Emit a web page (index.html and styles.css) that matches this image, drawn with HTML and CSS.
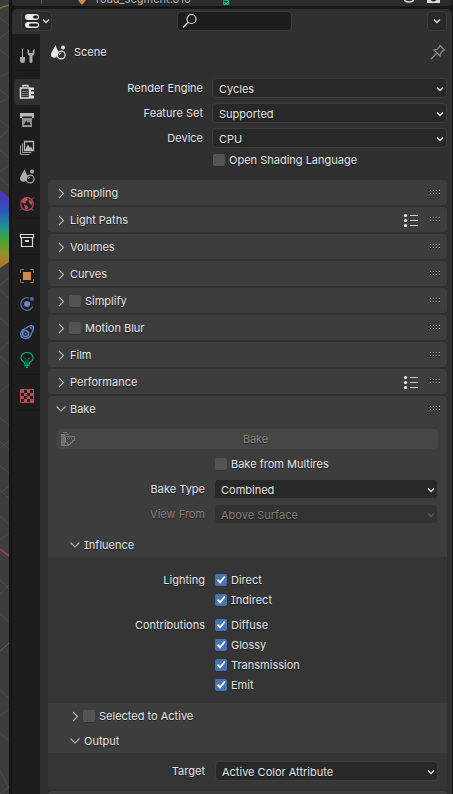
FILE: index.html
```html
<!DOCTYPE html>
<html lang="en">
<head>
<meta charset="utf-8">
<meta name="viewport" content="width=device-width, initial-scale=1">
<title>Render Properties</title>
<link rel="stylesheet" href="styles.css">
</head>
<body>
<svg class="defs" aria-hidden="true">
  <symbol id="right" viewBox="0 0 16 16"><path d="M6 4L10.500 8.500L6 13" fill="none" stroke="currentColor" stroke-width="1.100"/></symbol>
  <symbol id="down" viewBox="0 0 16 16"><path d="M3.500 5.500L8 10L12.500 5.500" fill="none" stroke="currentColor" stroke-width="1.100"/></symbol>
  <symbol id="drop" viewBox="0 0 8 8"><path d="M1 2.500L4 5.500L7 2.500" fill="none" stroke="currentColor" stroke-width="1.400"/></symbol>
  <symbol id="grip" viewBox="0 0 12 6">
    <path d="M0 1.500H12M0 4.500H12" stroke="#080808" stroke-dasharray="1 2"/>
    <path d="M0 .5H12M0 3.500H12" stroke="#a8a8a8" stroke-dasharray="1 2"/>
  </symbol>
  <symbol id="list" viewBox="0 0 16 16">
    <g fill="#eee"><circle cx="2.500" cy="3.500" r="1.600"/><circle cx="2.500" cy="8.500" r="1.600"/><circle cx="2.500" cy="13.500" r="1.600"/></g>
    <path d="M7 3.500H15M7 8.500H15M7 13.500H15" stroke="#ccc"/>
  </symbol>
  <symbol id="scene" viewBox="0 0 16 16">
    <path d="M5.500 1C6.300 4 8.600 7 8.600 9.500C7.700 10.300 7.400 11.300 7.600 12.600C5 14.600 1 13.500 1 11C1 8 4.500 4 5.500 1Z" fill="currentColor"/>
    <circle cx="13" cy="3.500" r="2" fill="currentColor"/>
    <circle cx="11.200" cy="11" r="3.900" fill="none" stroke="currentColor" stroke-width="1.200"/>
    <path d="M9.200 11A2 2 0 0 1 11.200 9" fill="none" stroke="currentColor"/>
  </symbol>
</svg>

<div class="app">
  <svg class="viewport" viewBox="0 0 9 794" preserveAspectRatio="xMinYMin slice" aria-hidden="true">
    <defs>
      <linearGradient id="hue" x1="0" y1="0" x2="0" y2="1">
        <stop offset="0" stop-color="#5a2ab8"/><stop offset=".25" stop-color="#2b58b8"/>
        <stop offset=".48" stop-color="#23948f"/><stop offset=".65" stop-color="#48a22e"/>
        <stop offset=".82" stop-color="#979032"/><stop offset="1" stop-color="#b86a24"/>
      </linearGradient>
    </defs>
    <rect width="9" height="794" fill="#3d3d3d"/>
    <path d="M0 18L9 25M0 38L9 31M0 50L9 57M0 77L9 72M0 90L9 97M0 102L9 98M0 120L9 128M0 137L9 130M0 150L9 158M0 172L9 165M0 178L9 186M0 285L9 278M0 290L9 298M0 318L9 326M0 350L9 342M0 356L9 364M0 392L9 384M0 418L9 425M0 448L9 441M0 442L9 449M0 466L9 473M0 493L9 486M0 490L9 498M0 516L9 524M0 540L9 533M0 580L9 589M0 594L9 585M0 614L9 622M0 690L9 698M0 716L9 709M0 733L9 741M0 771L9 788M0 794L9 787" stroke="#4c4c4c" fill="none"/>
    <path d="M0 651L9 643" stroke="#666"/>
    <path d="M0 8L9 5" stroke="#5f8f27" stroke-width="1.300"/>
    <path d="M0 549L9 556" stroke="#b53a50" stroke-width="1.500"/>
    <path d="M0 191C4 193 7 195 9 198V262L0 268Z" fill="url(#hue)"/>
  </svg>

  <div class="editors">
    <div class="outliner">
      <span class="guide"></span>
      <svg class="mesh" width="8" height="6" viewBox="0 0 8 6"><path d="M0 0H8L5 4Q4 5 3 4Z" fill="#d08746"/></svg>
      <span class="object-name">road_segment.010</span>
      <svg class="data" width="8" height="6" viewBox="0 0 8 6"><path d="M1.500 2.500V4.500H3.500V2.500H1.500V.5H6.500V2.500H4.500V4.500H6.500V2.500" stroke="#00b884" fill="none"/></svg>
      <svg class="eye" width="10" height="3" viewBox="0 0 10 3"><path d="M0 0Q5 4 10 0" stroke="#ddd" stroke-width="1.400" fill="none"/></svg>
      <svg width="13" height="3" viewBox="0 0 13 3"><path d="M0 0H3.500Q6.500 3 9.500 0H13V3H0Z" fill="#ddd"/></svg>
    </div>

    <div class="properties">
      <header class="topbar">
        <button class="box editor-type" type="button" aria-label="Editor type">
          <svg width="16" height="16" viewBox="0 0 16 16"><rect x="1" y="1" width="14" height="6" rx="3" fill="#e8e8e8"/><rect x="1" y="9" width="14" height="6" rx="3" fill="#e8e8e8"/><rect x="9" y="2.500" width="5" height="3" rx="1.500" fill="#222"/><rect x="5" y="10.500" width="9" height="3" rx="1.500" fill="#222"/></svg>
          <svg class="drop" width="8" height="8"><use href="#drop"/></svg>
        </button>
        <label class="search">
          <svg width="16" height="16" viewBox="0 0 16 16"><circle cx="9.500" cy="6" r="4.500" fill="none" stroke="#e0e0e0" stroke-width="1.200"/><path d="M6 9.500L1 14.500" stroke="#e0e0e0" stroke-width="1.300"/></svg>
          <input type="text" aria-label="Search">
        </label>
        <button class="box options" type="button" aria-label="Options"><svg class="drop" width="8" height="8"><use href="#drop"/></svg></button>
      </header>

      <div class="columns">
        <nav class="tabs">
          <div class="group">
            <button type="button" aria-label="Tool"><svg width="16" height="16" viewBox="0 0 16 16"><path d="M3.500 1V9" stroke="#aaa"/><path d="M1 9H6V12.500Q6 15 3.500 15T1 12.500Z" fill="#aaa"/><path d="M8.500 1V5Q8.500 7 10.500 8V14Q12 16 13.500 14V8Q15.500 7 15.500 5V1L13.700 2.200V5H10.300V2.200Z" fill="#aaa"/></svg></button>
          </div>
          <div class="group">
            <button type="button" class="active" aria-label="Render"><svg width="16" height="16" viewBox="0 0 16 16"><path d="M4 3V1.500H9V3" fill="none" stroke="#ddd" stroke-width="1.300"/><path d="M1.500 4H10.500V14H1.500Z" fill="#303030" stroke="#ddd" stroke-width="1.500"/><path d="M3 7.500H9M3 9.500H9M3 11.500H9" stroke="#777"/><path d="M11 3.500H15V6H12V7.500H15V10H12V11.500H15V14.500H11Z" fill="#ddd"/></svg></button>
            <button type="button" aria-label="Output"><svg width="16" height="16" viewBox="0 0 16 16"><path d="M1 1H15V6H13V4.500H3V6H1Z" fill="#b8b8b8"/><path d="M3 6H13V15H3Z" fill="#929292"/><path d="M4.500 13L7.500 8.500L9 11L10 9.500L12 13Z" fill="#222"/></svg></button>
            <button type="button" aria-label="View Layer"><svg width="16" height="16" viewBox="0 0 16 16"><path d="M5.500 1.500H14.500V10.500H5.500Z" fill="none" stroke="#bbb" stroke-width="1.300"/><path d="M6 10L9 4.500L11 8L12 6.500L14 10Z" fill="#bbb"/><path d="M3.500 3.500V12.500H12.500M1.500 5.500V14.500H10.500" fill="none" stroke="#999"/></svg></button>
            <button type="button" class="grey" aria-label="Scene"><svg width="16" height="16"><use href="#scene"/></svg></button>
            <button type="button" aria-label="World"><svg width="16" height="16" viewBox="0 0 16 16"><circle cx="8" cy="8" r="6.300" fill="none" stroke="#b84c57" stroke-width="1.200"/><path d="M2.500 5Q5 1 8 2L9 4L6.500 5.500L7.500 7L5 7.500L3.500 7ZM5 9L8 9.500L9.500 11L8 14L6 12.500ZM10.500 3L13.500 6.500L12.500 9.500L10.500 7.500L9.500 5Z" fill="#b84c57"/><path d="M1 14.500L3 12.500M13 3.500L15 1.500M11.500 12.500L14.500 14.500" stroke="#b84c57"/></svg></button>
          </div>
          <div class="group">
            <button type="button" aria-label="Collection"><svg width="16" height="16" viewBox="0 0 16 16"><path d="M1.500 2.500H14.500V5.500H1.500ZM2.500 5.500V14.500H13.500V5.500" fill="none" stroke="#ddd" stroke-width="1.200"/><path d="M6 9H10" stroke="#ddd" stroke-width="2"/></svg></button>
          </div>
          <div class="group">
            <button type="button" aria-label="Object"><svg width="16" height="16" viewBox="0 0 16 16"><path d="M4 4H12V12H4Z" fill="#cf8a50"/><path d="M1.500 5V1.500H5M11 1.500H14.500V5M14.500 11V14.500H11M5 14.500H1.500V11" fill="none" stroke="#a56a38"/></svg></button>
            <button type="button" aria-label="Physics"><svg width="16" height="16" viewBox="0 0 16 16"><circle cx="8" cy="8" r="3" fill="#6685d0"/><circle cx="13" cy="3" r="2" fill="#5069a8"/><path d="M10.500 2.200A6.300 6.300 0 1 0 13.800 10.500" fill="none" stroke="#5069a8" stroke-width="1.200"/></svg></button>
            <button type="button" aria-label="Constraints"><svg width="16" height="16" viewBox="0 0 16 16"><path d="M3.500 6L11 1.800Q15 .8 14.500 5L11 12.500Q8 15.500 4 14Q-.5 11 3.500 6Z" fill="none" stroke="#6685d0" stroke-width="1.300"/><circle cx="6.500" cy="9.500" r="3" fill="none" stroke="#6685d0" stroke-width="1.600"/><circle cx="6.500" cy="9.500" r="1" fill="#6685d0"/><circle cx="12.300" cy="3.800" r="1" fill="none" stroke="#6685d0"/></svg></button>
            <button type="button" aria-label="Data"><svg width="16" height="16" viewBox="0 0 16 16"><path d="M5.500 12V10.500Q2 8.500 2 5.800A6 5.300 0 0 1 14 5.800Q14 8.500 10.500 10.500V12Z" fill="none" stroke="#00a87b" stroke-width="1.200"/><path d="M5 5.500L7 7.500V11M11 5.500L9 7.500V11" fill="none" stroke="#00a87b" stroke-width=".8"/><path d="M5.500 13.500H10.500M7 15.300H9" stroke="#00a87b" stroke-width="1.400"/></svg></button>
          </div>
          <div class="group">
            <button type="button" aria-label="Texture"><svg width="16" height="16" viewBox="0 0 16 16"><path d="M1.500 1.500H14.500V14.500H1.500Z" fill="none" stroke="#b84c57"/><path d="M2 3.500H14M2 9.500H14" stroke="#b84c57" stroke-width="3" stroke-dasharray="3 3"/><path d="M5 6.500H14M5 12.500H14" stroke="#b84c57" stroke-width="3" stroke-dasharray="3 3"/></svg></button>
          </div>
        </nav>

        <main>
          <div class="context">
            <svg width="16" height="16"><use href="#scene"/></svg>
            <h1>Scene</h1>
            <button type="button" class="pin" aria-label="Pin"><svg width="16" height="16" viewBox="0 0 16 16"><path d="M10 1.500L14.500 6L13 6.500L10.500 9.500L10 12L4 6L7 5.500L9.500 3ZM6.500 9.500L1 15" fill="none" stroke="#8f8f8f" stroke-width="1.200"/></svg></button>
          </div>

          <div class="fields engine">
            <label for="engine">Render Engine</label>
            <span class="select"><select id="engine"><option>Cycles</option></select><svg class="drop" width="8" height="8"><use href="#drop"/></svg></span>
            <label for="feature">Feature Set</label>
            <span class="select"><select id="feature"><option>Supported</option></select><svg class="drop" width="8" height="8"><use href="#drop"/></svg></span>
            <label for="device">Device</label>
            <span class="select"><select id="device"><option>CPU</option></select><svg class="drop" width="8" height="8"><use href="#drop"/></svg></span>
          </div>
          <div class="fields osl">
            <label class="check"><input type="checkbox">Open Shading Language</label>
          </div>

          <section class="panel"><div class="head"><button type="button"><svg><use href="#right"/></svg><span>Sampling</span></button><svg class="grip"><use href="#grip"/></svg></div></section>
          <section class="panel"><div class="head"><button type="button"><svg><use href="#right"/></svg><span>Light Paths</span></button><button type="button" class="preset" aria-label="Presets"><svg><use href="#list"/></svg></button><svg class="grip"><use href="#grip"/></svg></div></section>
          <section class="panel"><div class="head"><button type="button"><svg><use href="#right"/></svg><span>Volumes</span></button><svg class="grip"><use href="#grip"/></svg></div></section>
          <section class="panel"><div class="head"><button type="button"><svg><use href="#right"/></svg><span>Curves</span></button><svg class="grip"><use href="#grip"/></svg></div></section>
          <section class="panel"><div class="head"><button type="button" aria-label="Expand Simplify"><svg><use href="#right"/></svg></button><label class="check"><input type="checkbox">Simplify</label><svg class="grip"><use href="#grip"/></svg></div></section>
          <section class="panel"><div class="head"><button type="button" aria-label="Expand Motion Blur"><svg><use href="#right"/></svg></button><label class="check"><input type="checkbox">Motion Blur</label><svg class="grip"><use href="#grip"/></svg></div></section>
          <section class="panel"><div class="head"><button type="button"><svg><use href="#right"/></svg><span>Film</span></button><svg class="grip"><use href="#grip"/></svg></div></section>
          <section class="panel"><div class="head"><button type="button"><svg><use href="#right"/></svg><span>Performance</span></button><button type="button" class="preset" aria-label="Presets"><svg><use href="#list"/></svg></button><svg class="grip"><use href="#grip"/></svg></div></section>

          <section class="panel">
            <div class="head"><button type="button"><svg><use href="#down"/></svg><span>Bake</span></button><svg class="grip"><use href="#grip"/></svg></div>
            <div class="bake-body">
              <button type="button" class="bake" disabled><svg width="16" height="16" viewBox="0 0 16 16"><path d="M3 1.500H7M1 3.500H9M1.500 3V15M1 14.500H9" fill="none" stroke="#7c7c7c"/><path d="M1.500 4H5V14H1.500Z" fill="#707070"/><path d="M5.500 5.500H14.500V9.500H12.500V11.500H10.500V13.500H7.500V11.500H5.500Z" fill="none" stroke="#7c7c7c"/><path d="M7 7.500H13" stroke="#7c7c7c" stroke-dasharray="1 1"/></svg><span>Bake</span></button>
              <div class="fields">
                <label class="check"><input type="checkbox">Bake from Multires</label>
                <label for="type">Bake Type</label>
                <span class="select"><select id="type"><option>Combined</option></select><svg class="drop" width="8" height="8"><use href="#drop"/></svg></span>
                <label for="view" class="off">View From</label>
                <span class="select off"><select id="view" disabled><option>Above Surface</option></select><svg class="drop" width="8" height="8"><use href="#drop"/></svg></span>
              </div>
            </div>

            <div class="head sub"><button type="button"><svg><use href="#down"/></svg><span>Influence</span></button></div>
            <div class="sub-body influence">
              <div class="fields tight">
                <span class="caption">Lighting</span>
                <label class="check"><input type="checkbox" checked>Direct</label>
                <label class="check"><input type="checkbox" checked>Indirect</label>
              </div>
              <div class="fields tight">
                <span class="caption">Contributions</span>
                <label class="check"><input type="checkbox" checked>Diffuse</label>
                <label class="check"><input type="checkbox" checked>Glossy</label>
                <label class="check"><input type="checkbox" checked>Transmission</label>
                <label class="check"><input type="checkbox" checked>Emit</label>
              </div>
            </div>

            <div class="head sub"><button type="button" aria-label="Expand Selected to Active"><svg><use href="#right"/></svg></button><label class="check"><input type="checkbox">Selected to Active</label></div>
            <div class="head sub"><button type="button"><svg><use href="#down"/></svg><span>Output</span></button></div>
            <div class="sub-body output">
              <div class="fields">
                <label for="target">Target</label>
                <span class="select"><select id="target"><option>Active Color Attribute</option></select><svg class="drop" width="8" height="8"><use href="#drop"/></svg></span>
              </div>
            </div>
          </section>
          <section class="panel"><div class="head"></div></section>
        </main>
      </div>
    </div>
  </div>
</div>
</body>
</html>
```
FILE: styles.css
```css
* { box-sizing: border-box; }

body {
  margin: 0;
  background: #161616;
  color: #e6e6e6;
  font: 11px/20px Inter, "Liberation Sans", sans-serif;
  font-feature-settings: "cv08";
  text-shadow: 0 1px 1px rgba(0, 0, 0, .5);
}

svg { display: block; flex: none; }
.defs { position: absolute; width: 0; height: 0; }

button, select, input {
  margin: 0;
  padding: 0;
  border: 0;
  background: none;
  color: inherit;
  font: inherit;
  font-feature-settings: inherit;
  letter-spacing: inherit;
  text-shadow: inherit;
}

.app {
  display: flex;
  gap: 3px;
  height: 100vh;
  padding-right: 1px;
  overflow: hidden;
}

.viewport { width: 9px; height: 100%; }

.editors {
  flex: 1;
  min-width: 0;
  display: flex;
  flex-direction: column;
  gap: 3px;
}

/* Outliner: only the bottom of its last row is visible */
.outliner {
  display: flex;
  align-items: flex-start;
  height: 6px;
  padding: 0 5px 0 29px;
  overflow: hidden;
  background: #2b2b2b;
  border-radius: 0 0 4px 4px;
}
.guide { width: 1px; height: 4px; margin-right: 36px; background: #555; }
.mesh { margin-right: 10px; }
.object-name { margin-top: -11px; color: #bbb; }
.data { margin: 0 auto 0 31px; }
.eye { margin-right: 13px; }
.outliner svg:last-child { margin-right: 7px; }

.properties {
  flex: 1;
  min-height: 0;
  display: flex;
  flex-direction: column;
  overflow: hidden;
  background: #303030;
  border-radius: 5px 5px 0 0;
}

.topbar {
  flex: none;
  display: grid;
  grid-template-columns: 1fr 115px 1fr;
  align-items: start;
  height: 25px;
  padding: 2px 5px 0 9px;
}
.box, .search {
  display: flex;
  align-items: center;
  height: 20px;
  border: 1px solid #3d3d3d;
  border-radius: 4px;
  background: #282828;
}
.editor-type { width: 31px; gap: 2px; padding-left: 2px; }
.search { background: #1d1d1d; padding-left: 4px; }
.search input { width: 100%; min-width: 0; outline: 0; }
.options { width: 20px; justify-content: center; justify-self: end; }
.drop { color: #ddd; }

.columns { flex: 1; min-height: 0; display: flex; }

.tabs {
  flex: none;
  width: 28px;
  display: flex;
  flex-direction: column;
  gap: 8px;
  padding-top: 8px;
  background: #1d1d1d;
}
.group { position: relative; padding-left: 2px; }
.group::after {
  content: "";
  position: absolute;
  left: 4px;
  right: 0;
  bottom: -1px;
  height: 1px;
  background: #191919;
}
.tabs button {
  display: flex;
  align-items: center;
  width: 100%;
  height: 26px;
  margin: 1px 0;
  padding-left: 5px;
}
.tabs button + button { margin-top: 2px; }
.tabs .active { background: #303030; border-radius: 4px 0 0 4px; }
.grey { color: #aaa; }

main { flex: 1; min-width: 0; padding: 8px 5px 0 8px; }

.context {
  display: flex;
  align-items: center;
  gap: 8px;
  height: 20px;
  padding: 0 1px 0 2px;
}
h1 { flex: 1; margin: 0; font: inherit; }

.fields {
  display: grid;
  grid-template-columns: 148px 1fr;
  column-gap: 10px;
  row-gap: 5px;
}
.fields > :not(.check):not(.select) { text-align: right; }
.fields .check { grid-column: 2; }
.tight { row-gap: 0; }
.engine { grid-template-columns: 155px 1fr; column-gap: 9px; margin-top: 16px; }
.osl { grid-template-columns: 155px 1fr; margin: 2px 0 10px; }

.select { position: relative; display: block; }
.select select {
  display: block;
  width: 100%;
  height: 20px;
  padding: 0 16px 0 6px;
  appearance: none;
  border: 1px solid #3d3d3d;
  border-radius: 4px;
  background: #282828;
}
.select .drop { position: absolute; right: 3px; top: 7px; pointer-events: none; }
.bake-body .select { margin-left: -1px; }
.off, .off select, .off .drop { color: #828282; opacity: 1; }
.off .drop { color: #5c5c5c; }
.off select { background: #323232; }

.check { display: flex; align-items: center; gap: 4px; }
.check input {
  flex: none;
  width: 12px;
  height: 12px;
  appearance: none;
  border-radius: 2px;
  background: #545454;
  box-shadow: 0 1px 0 rgba(0, 0, 0, .15);
}
.check input:checked { background: #4772b3; }
.check input:checked::before {
  content: "";
  display: block;
  width: 12px;
  height: 12px;
  background: #fff;
  clip-path: polygon(15% 52%, 26% 42%, 42% 59%, 76% 16%, 88% 26%, 43% 82%);
}

.panel {
  margin-bottom: 2px;
  overflow: hidden;
  border-radius: 4px;
  background: #3d3d3d;
}
.head {
  display: flex;
  align-items: center;
  height: 25px;
  padding: 0 5px;
}
.head button { display: flex; align-items: center; }
.head button span { padding-left: 1px; }
.head svg { width: 16px; height: 16px; color: #b4b4b4; }
.head .grip { width: 12px; height: 6px; margin-left: auto; }
.head .preset { margin-left: auto; }
.head .preset + .grip { margin-left: 11px; }
.sub { padding-left: 19px; }

.bake-body { padding: 8px 9px; }
.bake {
  display: grid;
  grid-template-columns: 16px 1fr;
  align-items: center;
  width: 100%;
  height: 20px;
  margin-bottom: 5px;
  padding: 0 3px;
  border-radius: 4px;
  background: #464646;
  color: #858585;
}
.sub-body { background: #353535; }
.influence { display: grid; gap: 5px; padding: 13px 9px 8px; }
.output { padding: 8px 9px; }
```
